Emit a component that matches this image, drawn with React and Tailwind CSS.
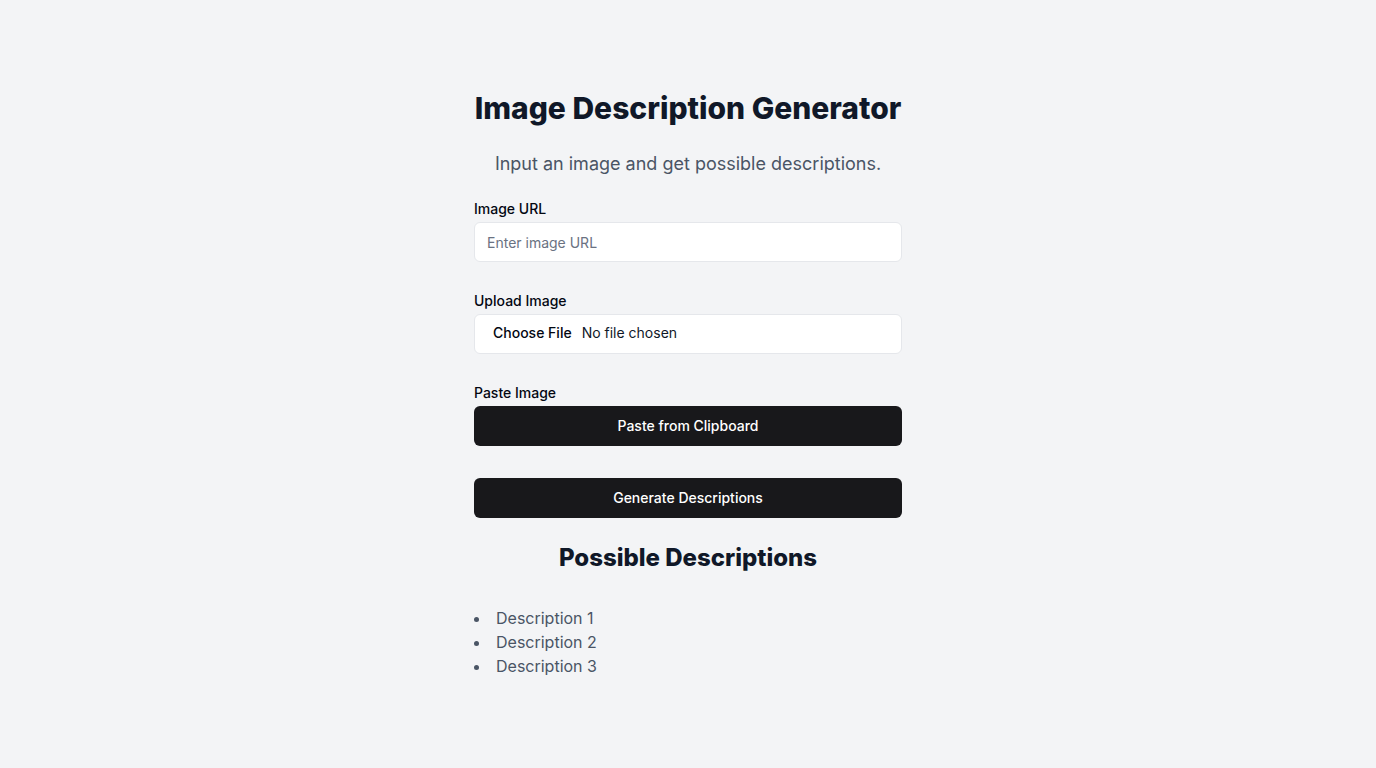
import React from 'react';

const fieldClass =
  'flex h-10 w-full rounded-md border border-gray-200 bg-white px-3 py-2 text-sm text-gray-900 placeholder:text-gray-500 focus:outline-none';

const Field = ({ label, children, className = '' }) => (
  <div className={className}>
    <label className="mb-1.5 block text-sm font-medium leading-none text-gray-950">{label}</label>
    {children}
  </div>
);

const DarkButton = ({ children, className = '' }) => (
  <button
    type="button"
    className={`flex h-10 w-full items-center justify-center rounded-md bg-[#18181b] px-4 text-sm font-medium text-white ${className}`}
  >
    {children}
  </button>
);

export default function App() {
  const descriptions = ['Description 1', 'Description 2', 'Description 3'];

  return (
    <div className="flex min-h-screen items-center justify-center bg-gray-100 font-['Inter',sans-serif]">
      <div className="w-[428px]">
        <h1 className="text-center text-3xl font-extrabold leading-9 text-gray-900">Image Description Generator</h1>
        <p className="mt-6 text-center text-lg leading-7 text-gray-600">
          Input an image and get possible descriptions.
        </p>

        {/* Inputs */}
        <Field label="Image URL" className="mt-6">
          <input type="text" placeholder="Enter image URL" className={fieldClass} />
        </Field>

        <Field label="Upload Image" className="mt-8">
          <input
            type="file"
            className={`${fieldClass} file:mr-1 file:border-0 file:bg-transparent file:px-1.5 file:text-sm file:font-medium file:text-gray-950`}
          />
        </Field>

        <Field label="Paste Image" className="mt-8">
          <DarkButton>Paste from Clipboard</DarkButton>
        </Field>

        <DarkButton className="mt-8">Generate Descriptions</DarkButton>

        {/* Results */}
        <h2 className="mt-6 text-center text-2xl font-extrabold leading-8 text-gray-900">Possible Descriptions</h2>
        <ul className="mt-8 list-inside list-disc text-base leading-6 text-gray-600">
          {descriptions.map((d) => (
            <li key={d}>{d}</li>
          ))}
        </ul>
      </div>
    </div>
  );
}
